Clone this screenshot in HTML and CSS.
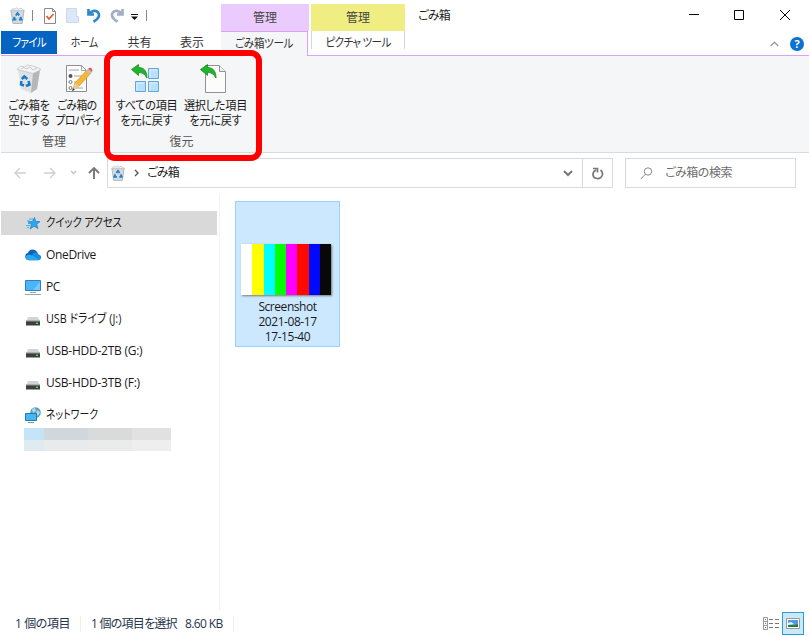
FILE: index.html
```
<!DOCTYPE html>
<html lang="ja">

<head>
  <meta charset="UTF-8">
  <meta name="viewport" content="width=device-width, initial-scale=1.0">
  <title>ごみ箱</title>
  <link rel="stylesheet" href="styles.css">
</head>

<body>
  <!-- 共通アイコン -->
  <svg class="defs" width="0" height="0">
    <symbol id="bin" viewBox="0 0 16 18">
      <path d="M1 3.500h14l-2 14H3z" fill="#d5dadd" stroke="#a1a7ab" stroke-width=".8" />
      <path d="M1 4l2-2.500 2 .7L7 .8l2 1.400 3-.9 3 2.700z" fill="#eef0f1" stroke="#a9aeb2" stroke-width=".6" />
      <path d="M6.200 9L8 6.500 9.800 9M11 10.500l1.300 2.800H9.500M6.800 13.300H3.700L5 10.500" fill="none" stroke="#1c7fd0" stroke-width="2" />
    </symbol>
    <symbol id="drive" viewBox="0 0 14 9">
      <path d="M2.500 0h9L14 4H0z" fill="#d3d4d5" />
      <rect y="4" width="14" height="4.500" rx=".6" fill="#3d3e40" />
      <rect y="3.500" width="14" height="1" fill="#8c8e90" />
      <rect x="10" y="5.500" width="2" height="1.500" fill="#3ee04a" />
    </symbol>
    <symbol id="back-arrow" viewBox="0 0 17 15">
      <path d="M.5 5.500L7.500.5v3c5.500 0 8.500 3.500 8.500 10.500-2-3.500-4-5.500-8.500-5.500v3z" fill="#22b32c" stroke="#128a1d" stroke-width=".8" />
    </symbol>
  </svg>

  <div id="window">
    <header class="title-bar">
      <div class="quick">
        <svg width="15" height="17"><use href="#bin" /></svg>
        <i class="bar"></i>
        <svg class="q-check" width="12" height="16" viewBox="0 0 12 16">
          <path d="M.5.5h8l3 3v12H.5z" fill="#fff" stroke="#8b8b8b" />
          <path d="M8.500.5v3h3" fill="none" stroke="#8b8b8b" />
          <path d="M2.500 8l2.500 3 4.500-5" fill="none" stroke="#e4592a" stroke-width="1.700" />
        </svg>
        <svg class="q-folder" width="13" height="15" viewBox="0 0 13 15">
          <path d="M.5.5h10v8h2v6H.5z" fill="#dce7f8" stroke="#cad7ee" />
        </svg>
        <svg class="q-undo" width="14" height="15" viewBox="0 0 14 15">
          <path d="M1.500 1v5.500H7M2 6C5 2.500 9 1.800 11 4.300c2.300 3.200.5 6.700-4.500 9.500" fill="none" stroke="#2f87cd" stroke-width="2.700" />
        </svg>
        <svg class="q-redo" width="14" height="15" viewBox="0 0 14 15">
          <path d="M12.500 1v5.500H7M12 6C9 2.500 5 1.800 3 4.300.7 7.500 2.500 11 7.500 13.800" fill="none" stroke="#a1aec4" stroke-width="2.700" />
        </svg>
        <svg class="q-more" width="7" height="6" viewBox="0 0 7 6"><path d="M0 0h7v1H0zM0 2.500h7L3.500 6z" fill="#111" /></svg>
        <i class="bar bar-last"></i>
      </div>
      <div class="group purple">管理</div>
      <div class="group yellow">管理</div>
      <h1>ごみ箱</h1>
      <div class="controls">
        <svg width="102" height="12" viewBox="0 0 102 12" fill="none" stroke="#000">
          <path d="M0 5.500h10M45.500 1.500h9v9h-9zM91 1l10 10M101 1L91 11" />
        </svg>
      </div>
    </header>

    <nav class="tabs">
      <div class="tab file"><span>ファイル</span></div>
      <div class="tab home"><span>ホーム</span></div>
      <div class="tab share">共有</div>
      <div class="tab view">表示</div>
      <div class="tab active"><span>ごみ箱ツール</span></div>
      <div class="tab picture"><span>ピクチャ ツール</span></div>
      <div class="help">
        <svg width="9" height="6" viewBox="0 0 9 6"><path d="M.7 5L4.500 1.200 8.300 5" fill="none" stroke="#999" stroke-width="1.300" /></svg>
        <b class="question">?</b>
      </div>
    </nav>

    <section class="ribbon">
      <div class="ribbon-group manage">
        <div class="buttons">
          <div class="button">
            <svg width="28" height="30" viewBox="0 0 28 30">
              <path d="M3 6l15 3 7-3-3 19-6 4-10-4z" fill="#dfe1e3" />
              <path d="M18 9l7-3-3 19-6 4z" fill="#b4b8bb" />
              <path d="M2 5.500L5.500 2l4 1 3-2 5 1 4 1 4.500 2.500L18 9.500z" fill="#f3f4f5" stroke="#b9bec2" stroke-width=".7" />
              <path d="M6 5l3-2 2 2 4-2 3 3 4-2" fill="none" stroke="#c6cacc" />
              <path d="M6.800 15l2.500-2.500 3 2.500M13.500 17l1 3.500-3.500 1.500M9 21.500l-3-1 .3-3.500" fill="none" stroke="#1779ca" stroke-width="2.500" />
            </svg>
            <p>ごみ箱を<br>空にする</p>
          </div>
          <div class="button prop-button">
            <svg width="28" height="30" viewBox="0 0 28 30">
              <path d="M1.500 1.500h15l5 5v21h-20z" fill="#fcfcfc" stroke="#8d8d8d" />
              <path d="M16.500 1.500v5h5M4 6h10M9 12h9M9 18h7M9 24h9" fill="none" stroke="#a4a4a4" />
              <circle cx="5.500" cy="12" r="2" fill="#555" />
              <circle cx="5.500" cy="18" r="1.500" fill="#fff" stroke="#777" />
              <circle cx="5.500" cy="24" r="1.500" fill="#fff" stroke="#777" />
              <path d="M8 25l2-6L22 6l4 3-12 13z" fill="#f7b92d" stroke="#d7892a" stroke-width=".7" />
              <path d="M21 7l2-2 4 3-2 2z" fill="#b8c1ca" />
              <path d="M23 5l1-1q2-1 3 1t0 3z" fill="#e45b50" />
              <path d="M7 27l3-8 4 3z" fill="#e9cca0" />
              <path d="M7 27l1-3 2 2z" fill="#444" />
            </svg>
            <p class="properties">ごみ箱の<br>プロパティ</p>
          </div>
        </div>
        <h2>管理</h2>
      </div>
      <div class="ribbon-group restore">
        <div class="buttons">
          <div class="button">
            <svg width="30" height="30" viewBox="0 0 30 30">
              <g fill="#b8dffb" stroke="#64a7d7">
                <path d="M18.500 4.500h10v10h-10zM5.500 17.500h10v10h-10zM18.500 17.500h10v10h-10z" />
              </g>
              <path d="M20 13V6h7M7 26v-7h7M20 26v-7h7" fill="none" stroke="#dff2ff" />
              <use href="#back-arrow" x="1" width="17" height="15" />
            </svg>
            <p>すべての項目<br>を元に戻す</p>
          </div>
          <div class="button">
            <svg width="30" height="30" viewBox="0 0 30 30">
              <path d="M6.500 1.500h14l6 6v21h-20z" fill="#fcfcfc" stroke="#929292" />
              <path d="M20.500 1.500v6h6" fill="#f1f1f1" stroke="#929292" />
              <use href="#back-arrow" x="1" width="17" height="15" />
            </svg>
            <p>選択した項目<br>を元に戻す</p>
          </div>
        </div>
        <h2>復元</h2>
      </div>
      <div class="highlight"></div>
    </section>

    <section class="address-row">
      <svg width="94" height="16" viewBox="0 0 94 16" fill="none">
        <path d="M6 3L1 8l5 5M1 8h11M36 3l5 5-5 5M41 8H30" stroke="#d0d0d0" stroke-width="1.400" />
        <path d="M57 6l2.500 2.500L62 6" stroke="#c5c5c5" stroke-width="1.400" />
        <path d="M75 8l5-5 5 5M80 3v11" stroke="#777" stroke-width="1.900" />
      </svg>
      <div class="address">
        <svg class="address-bin" width="14" height="16"><use href="#bin" /></svg>
        <svg class="chevron" width="5" height="8" viewBox="0 0 5 8"><path d="M1 1l3 3-3 3" fill="none" stroke="#555" stroke-width="1.400" /></svg>
        <span>ごみ箱</span>
        <svg class="down" width="10" height="7" viewBox="0 0 10 7"><path d="M1 1l4 4 4-4" fill="none" stroke="#777" stroke-width="2" /></svg>
        <div class="reload">
          <svg width="12" height="13" viewBox="0 0 12 13"><path d="M4 3C0 5 0 10 4 11.300c3 1 7-1 6.500-5C10.300 5 9.500 3.700 8.500 3M1 1.500h4.500v4" fill="none" stroke="#777" stroke-width="1.700" /></svg>
        </div>
      </div>
      <div class="search">
        <svg width="13" height="13" viewBox="0 0 13 13"><circle cx="8" cy="4.500" r="3.700" fill="none" stroke="#888" /><path d="M5.300 7.300L.7 12" stroke="#888" /></svg>
        <span>ごみ箱の検索</span>
      </div>
    </section>

    <div class="content">
      <aside>
        <ul>
          <li class="selected">
            <svg width="16" height="16" viewBox="0 0 16 16">
              <path d="M9.500 2.500l1.300 4 4.200.1-3.300 2.700 1.200 4.200-3.900-2.300L5.200 14l1.200-4.500L3 6.800l4.300-.3z" fill="#2ea5ed" stroke="#1781c7" stroke-width=".7" />
              <path d="M4 4h4M2 6h3M3 8.500h2M1 10.500h4M2 12.500h2" stroke="#4badea" />
            </svg>
            <span class="quick-access">クイック アクセス</span>
          </li>
          <li>
            <svg width="16" height="16" viewBox="0 0 16 16">
              <path d="M3 6C4 2 10 1 12.500 6l1 7H3C-1 12-.5 6.500 3 6z" fill="#0965b8" />
              <path d="M7 8c3-4 6-3 6.500-.5C17 8 17 13 13.500 13.200H4z" fill="#168be2" />
              <path d="M3 13.200c-3-1-3-5 .5-5.500 3-.5 7 3 11 4.800l-1.500.7z" fill="#2aa8ef" />
            </svg>
            <span class="latin">OneDrive</span>
          </li>
          <li>
            <svg width="16" height="16" viewBox="0 0 16 16">
              <path d="M.5 1.500h15v10H.5z" fill="#49b5fa" stroke="#367eaf" />
              <path d="M8 11L15 3v8z" fill="#70cbff" />
              <path d="M5 13.500h6M0 15.500h16" stroke="#91a7b8" />
            </svg>
            <span class="latin">PC</span>
          </li>
          <li><svg class="drive" width="14" height="9"><use href="#drive" /></svg><span class="usb">USB ドライブ (J:)</span></li>
          <li><svg class="drive" width="14" height="9"><use href="#drive" /></svg><span class="hdd">USB-HDD-2TB (G:)</span></li>
          <li><svg class="drive" width="14" height="9"><use href="#drive" /></svg><span class="hdd">USB-HDD-3TB (F:)</span></li>
          <li>
            <svg width="16" height="16" viewBox="0 0 16 16">
              <circle cx="10.500" cy="5.500" r="5.300" fill="#5a9fbf" />
              <path d="M7 2l3-1 1 3-3 2zM12 3l3 2-2 4-2-2z" fill="#b4dae6" />
              <path d="M.5 6.500h11v7H.5z" fill="#45b6f8" stroke="#2279ad" />
              <path d="M3 15.500h6" stroke="#8097a6" />
            </svg>
            <span class="network">ネットワーク</span>
          </li>
        </ul>
        <!-- モザイク -->
        <div class="mosaic"><i></i><i></i><i></i><i></i><i></i><i></i><i></i><i></i></div>
      </aside>
      <main>
        <figure>
          <div class="thumbnail"><i></i><i></i><i></i><i></i><i></i><i></i><i></i><i></i></div>
          <figcaption>Screenshot<br>2021-08-17<br>17-15-40</figcaption>
        </figure>
      </main>
    </div>

    <footer>
      <span class="count">1 個の項目</span>
      <span class="chosen">1 個の項目を選択</span>
      <span class="size">8.60 KB</span>
      <div class="views">
        <svg width="16" height="13" viewBox="0 0 16 13">
          <path d="M.5.5h4v4h-4zM.5 4.500h4v4h-4zM.5 8.500h4v4h-4z" fill="#fff" stroke="#999" />
          <path d="M2 2h1v1H2zM2 6h1v1H2z" fill="#347bb4" /><path d="M2 10h1v1H2z" fill="#c33" />
          <path d="M6 2.500h4M12 2.500h4M6 6.500h4M12 6.500h4M6 10.500h4M12 10.500h4" stroke="#777" />
        </svg>
        <div class="large-view">
          <svg width="14" height="11" viewBox="0 0 14 11">
            <path d="M.5.5h13v10H.5z" fill="#fff" stroke="#999" />
            <path d="M2 2h10v7H2z" fill="#4d9ce8" /><path d="M2 5l3-1 3 2h4v1H2z" fill="#e7f5fd" /><path d="M2 7l10-1v3H2z" fill="#26784d" />
          </svg>
        </div>
      </div>
    </footer>
  </div>
</body>

</html>
```
FILE: styles.css
```
/* reset */
html,
body,
ul,
li,
p,
h1,
h2,
figure {
  margin: 0;
  padding: 0;
  box-sizing: border-box;
  list-style: none;
  font-weight: normal;
}

body {
  width: 809px;
  height: 636px;
  overflow: hidden;
  background-color: #fff;
  color: #1a1a1a;
  font-family: "Open Sans", "Noto Sans CJK JP", sans-serif;
  font-size: 12px;
  line-height: 16px;
  font-feature-settings: "palt";
}

div,
section,
nav,
header,
aside,
main,
footer {
  box-sizing: border-box;
}

svg {
  flex: none;
  display: block;
}

.defs {
  position: absolute;
}

#window {
  display: flex;
  flex-direction: column;
  height: 636px;
  padding-left: 1px;
  white-space: nowrap;
}

/* title bar */
.title-bar {
  display: flex;
  height: 31px;
}

.quick {
  display: flex;
  align-items: center;
  width: 220px;
  padding-left: 9px;
}

.bar {
  width: 1px;
  height: 11px;
  margin-left: 7px;
  background-color: #888;
}

.q-check {
  margin-left: 11px;
}

.q-folder {
  margin-left: 10px;
}

.q-undo {
  margin-left: 8px;
}

.q-redo {
  margin-left: 9px;
}

.q-more {
  margin: 3px 0 0 7px;
}

.bar-last {
  margin-left: 8px;
}

.group {
  display: flex;
  align-items: center;
  justify-content: center;
  height: 27px;
  margin-top: 4px;
  color: #444;
}

.purple {
  width: 88px;
  background-color: #ebcbfd;
}

.yellow {
  width: 94px;
  margin-left: 2px;
  background-color: #f0ee83;
}

h1 {
  margin-left: 13px;
  font-size: 12px;
  line-height: 32px;
  letter-spacing: -0.8px;
}

.controls {
  margin: 9px 18px 0 auto;
}

/* tabs */
.tabs {
  display: flex;
  height: 25px;
  border-bottom: 1px solid #dda0fb;
}

.tab {
  display: flex;
  align-items: center;
  justify-content: center;
  height: 24px;
  color: #333;
}

/* 半角幅に近いカナ */
.tab span {
  transform: scaleX(0.88);
}

.file {
  width: 56px;
  height: 23px;
  background-color: #0563c1;
  color: #fff;
  letter-spacing: -0.8px;
}

.home {
  width: 55px;
  letter-spacing: -0.6px;
}

.home span {
  transform: scaleX(0.83);
}

.share {
  width: 55px;
}

.view {
  width: 50px;
}

.active {
  width: 87px;
  height: 25px;
  margin-left: 4px;
  padding-bottom: 1px;
  background-color: #f5f6f7;
  border: solid #dda0fb;
  border-width: 1px 1px 0 0;
  letter-spacing: -0.4px;
}

.picture {
  width: 94px;
  height: 18px;
  margin-left: 3px;
  padding-top: 6px;
  border: solid #d5d5d5;
  border-width: 0 1px;
  letter-spacing: -0.7px;
}

.help {
  display: flex;
  align-items: center;
  gap: 11px;
  height: 23px;
  margin: 1px 5px 0 auto;
}

.question {
  width: 14px;
  height: 14px;
  border-radius: 50%;
  background-color: #0873d1;
  color: #fff;
  font-size: 11px;
  line-height: 14px;
  text-align: center;
}

/* ribbon */
.ribbon {
  position: relative;
  display: flex;
  height: 97px;
  padding-top: 8px;
  background-color: #f5f6f7;
  border-bottom: 1px solid #d9dadb;
}

.ribbon-group {
  text-align: center;
}

.manage {
  width: 106px;
}

.restore {
  width: 149px;
}

.buttons {
  display: flex;
}

.manage .buttons {
  padding-left: 4px;
}

.button {
  width: 48px;
}

.restore .button {
  width: 69px;
}

.restore .buttons {
  padding-left: 5px;
}

.button svg {
  margin: 0 auto;
}

.prop-button svg {
  margin-left: 12px;
}

.restore .button svg {
  margin-left: 18px;
}

.button p {
  margin-top: 4px;
  line-height: 15px;
  letter-spacing: -0.3px;
  transform: scaleX(0.93);
}

.button .properties {
  letter-spacing: -0.6px;
  transform: scaleX(0.9);
}

.ribbon h2 {
  margin-top: 6px;
  color: #555;
  font-size: 12px;
  line-height: 16px;
}

.highlight {
  position: absolute;
  left: 103px;
  top: -6px;
  width: 158px;
  height: 111px;
  border: 6px solid #f00;
  border-radius: 11px;
}

/* address row */
.address-row {
  display: flex;
  align-items: center;
  height: 41px;
  padding: 0 0 1px 13px;
}

.address {
  display: flex;
  align-items: center;
  width: 506px;
  height: 30px;
  margin-left: -1px;
  border: 1px solid #d9d9d9;
}

.address span {
  letter-spacing: -0.8px;
}

.address-bin {
  margin-left: 3px;
}

.chevron {
  margin: 0 8px 0 9px;
}

.down {
  margin-left: auto;
}

.reload {
  display: flex;
  align-items: center;
  justify-content: center;
  width: 30px;
  height: 28px;
  margin-left: 9px;
  border-left: 1px solid #d9d9d9;
}

.search {
  display: flex;
  align-items: center;
  gap: 12px;
  width: 171px;
  height: 30px;
  margin-left: 12px;
  padding-left: 14px;
  border: 1px solid #d9d9d9;
  color: #6d6d6d;
  letter-spacing: -0.5px;
}

/* content */
.content {
  display: flex;
  height: 417px;
}

aside {
  width: 219px;
  margin-top: 1px;
  padding-top: 12px;
  border-right: 1px solid #f2f2f2;
}

li {
  display: flex;
  align-items: center;
  gap: 5px;
  width: 216px;
  height: 32px;
  padding-left: 24px;
}

li span {
  transform-origin: left;
}

li.selected {
  height: 24px;
  margin: 4px 0;
  background-color: #d9d9d9;
}

.quick-access {
  transform: scaleX(0.86);
}

.latin {
  letter-spacing: -0.35px;
}

.usb {
  transform: scaleX(0.9);
}

.hdd {
  letter-spacing: -0.25px;
}

.network {
  transform: scaleX(0.82);
}

.drive {
  margin: 5px 1px 0;
}

.mosaic {
  display: grid;
  grid-template-columns: 20px 44px 44px 39px;
  grid-template-rows: 12px 11px;
  width: 147px;
  margin: -3px 0 0 23px;
}

.mosaic i:nth-child(1) { background-color: #c5e4f7; }
.mosaic i:nth-child(2) { background-color: #d0d8dd; }
.mosaic i:nth-child(3) { background-color: #d9dbdb; }
.mosaic i:nth-child(4) { background-color: #e1e1e1; }
.mosaic i:nth-child(5) { background-color: #dfeaf1; }
.mosaic i:nth-child(6) { background-color: #e8eaec; }
.mosaic i:nth-child(7) { background-color: #ebebec; }
.mosaic i:nth-child(8) { background-color: #eee; }

main {
  padding: 7px 0 0 15px;
}

figure {
  width: 105px;
  height: 146px;
  padding: 42px 5px 0;
  background-color: #cce8ff;
  border: 1px solid #99d1ff;
}

.thumbnail {
  display: flex;
  width: 90px;
  height: 51px;
  box-shadow: 1px 1px 2px #777;
}

.thumbnail i {
  flex: 1;
}

.thumbnail i:nth-child(1) { background-color: #fff; }
.thumbnail i:nth-child(2) { background-color: #ff0; }
.thumbnail i:nth-child(3) { background-color: #0ff; }
.thumbnail i:nth-child(4) { background-color: #0f0; }
.thumbnail i:nth-child(5) { background-color: #f0f; }
.thumbnail i:nth-child(6) { background-color: #ff0800; }
.thumbnail i:nth-child(7) { background-color: #0008ff; }
.thumbnail i:nth-child(8) { background-color: #080808; }

figcaption {
  margin-top: 4px;
  line-height: 15px;
  letter-spacing: -0.45px;
  text-align: center;
}

/* status bar */
footer {
  display: flex;
  align-items: center;
  height: 25px;
  padding-left: 14px;
  color: #26354d;
}

.count {
  width: 65px;
  border-right: 1px solid #eee;
  letter-spacing: -0.4px;
}

.chosen {
  width: 94px;
  margin-left: 10px;
  letter-spacing: -0.75px;
}

.size {
  width: 48px;
  border-right: 1px solid #eee;
  letter-spacing: -0.6px;
}

.views {
  display: flex;
  align-items: center;
  gap: 3px;
  margin: 0 5px 0 auto;
}

.large-view {
  display: flex;
  align-items: center;
  justify-content: center;
  width: 22px;
  height: 23px;
  background-color: #cbe8f7;
  border: 1px solid #26a0da;
}
```
